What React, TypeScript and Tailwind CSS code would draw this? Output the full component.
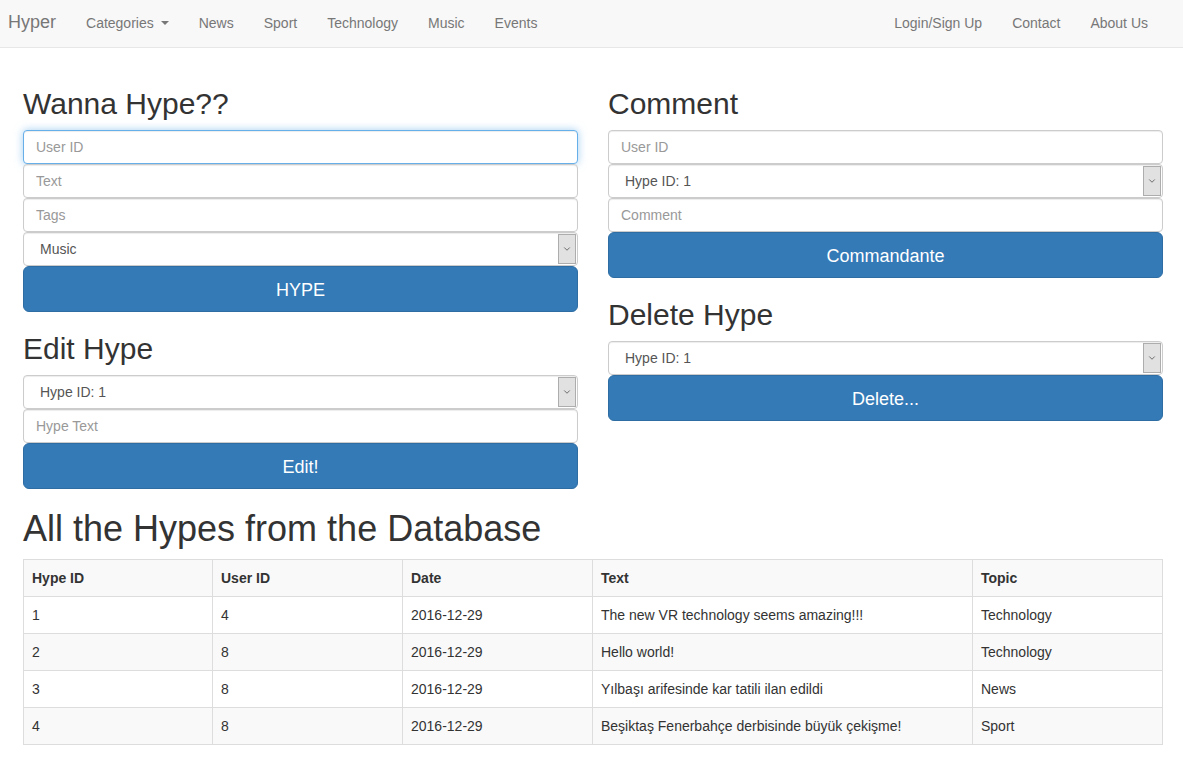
import { ChevronDown } from 'lucide-react'

const FONT = { fontFamily: '"Liberation Sans", Arial, Helvetica, sans-serif' }

const NAV_LEFT = ['News', 'Sport', 'Technology', 'Music', 'Events']
const NAV_RIGHT = ['Login/Sign Up', 'Contact', 'About Us']

const HYPES = [
  { id: 1, user: 4, date: '2016-12-29', text: 'The new VR technology seems amazing!!!', topic: 'Technology' },
  { id: 2, user: 8, date: '2016-12-29', text: 'Hello world!', topic: 'Technology' },
  { id: 3, user: 8, date: '2016-12-29', text: 'Yılbaşı arifesinde kar tatili ilan edildi', topic: 'News' },
  { id: 4, user: 8, date: '2016-12-29', text: 'Beşiktaş Fenerbahçe derbisinde büyük çekişme!', topic: 'Sport' },
]

function Input({ placeholder, focused = false }: { placeholder: string; focused?: boolean }) {
  return (
    <input
      type="text"
      placeholder={placeholder}
      className={`block w-full h-[34px] px-3 text-sm text-[#555] placeholder:text-[#999] bg-white rounded border outline-none ${
        focused
          ? 'border-[#66afe9] shadow-[inset_0_1px_1px_rgba(0,0,0,0.075),0_0_8px_rgba(102,175,233,0.6)]'
          : 'border-[#ccc] shadow-[inset_0_1px_1px_rgba(0,0,0,0.075)]'
      }`}
    />
  )
}

function Select({ value }: { value: string }) {
  return (
    <div className="flex h-[34px] w-full bg-white border border-[#ccc] rounded shadow-[inset_0_1px_1px_rgba(0,0,0,0.075)]">
      <div className="flex-1 flex items-center pl-4 text-sm text-[#555]">{value}</div>
      <div className="w-[18px] my-px mr-px flex items-center justify-center bg-[#e1e1e1] border border-[#adadad]">
        <ChevronDown className="w-[10px] h-[10px] text-[#555]" strokeWidth={2} />
      </div>
    </div>
  )
}

function Button({ label }: { label: string }) {
  return (
    <button className="block w-full h-[46px] pt-1 text-[18px] text-white bg-[#337ab7] border border-[#2e6da4] rounded-md">
      {label}
    </button>
  )
}

function Heading({ children }: { children: React.ReactNode }) {
  return <h2 className="text-[30px] leading-[1.1] text-[#333] mt-5 mb-[10px]">{children}</h2>
}

export default function App() {
  return (
    <div className="min-h-screen bg-white text-[#333] text-sm" style={FONT}>
      {/* Navbar */}
      <nav className="h-[48px] bg-[#f8f8f8] border-b border-[#e7e7e7] flex items-center justify-between">
        <div className="flex items-center -mt-px">
          <span className="pl-2 pr-[30px] text-[18px] text-[#777]">Hyper</span>
          <span className="flex items-center gap-[7px] pr-[30px] text-[#777]">
            Categories
            <span className="w-0 h-0 border-x-4 border-x-transparent border-t-4 border-t-[#777]" />
          </span>
          {NAV_LEFT.map((item) => (
            <span key={item} className="pr-[30px] text-[#777]">
              {item}
            </span>
          ))}
        </div>
        <div className="flex items-center pr-[35px] -mt-px">
          {NAV_RIGHT.map((item, i) => (
            <span key={item} className={`text-[#777] ${i > 0 ? 'pl-[30px]' : ''}`}>
              {item}
            </span>
          ))}
        </div>
      </nav>

      <div className="pl-[23px] pr-[20px] pt-[19px] pb-5">
        <div className="grid grid-cols-2 gap-[30px]">
          {/* Left column */}
          <div>
            <Heading>Wanna Hype??</Heading>
            <Input placeholder="User ID" focused />
            <Input placeholder="Text" />
            <Input placeholder="Tags" />
            <Select value="Music" />
            <Button label="HYPE" />

            <Heading>Edit Hype</Heading>
            <Select value="Hype ID: 1" />
            <Input placeholder="Hype Text" />
            <Button label="Edit!" />
          </div>

          {/* Right column */}
          <div>
            <Heading>Comment</Heading>
            <Input placeholder="User ID" />
            <Select value="Hype ID: 1" />
            <Input placeholder="Comment" />
            <Button label="Commandante" />

            <Heading>Delete Hype</Heading>
            <Select value="Hype ID: 1" />
            <Button label="Delete..." />
          </div>
        </div>

        <h1 className="text-[36px] leading-[1.1] text-[#333] mt-5 mb-[10px]">All the Hypes from the Database</h1>

        <table className="w-full border-collapse border border-[#ddd] table-fixed">
          <colgroup>
            <col className="w-[189px]" />
            <col className="w-[190px]" />
            <col className="w-[190px]" />
            <col className="w-[380px]" />
            <col />
          </colgroup>
          <tbody>
            <tr className="bg-[#f9f9f9]">
              {['Hype ID', 'User ID', 'Date', 'Text', 'Topic'].map((h) => (
                <th key={h} className="border border-[#ddd] p-2 text-left font-bold leading-5">
                  {h}
                </th>
              ))}
            </tr>
            {HYPES.map((row, i) => (
              <tr key={row.id} className={i % 2 === 1 ? 'bg-[#f9f9f9]' : 'bg-white'}>
                <td className="border border-[#ddd] p-2 leading-5">{row.id}</td>
                <td className="border border-[#ddd] p-2 leading-5">{row.user}</td>
                <td className="border border-[#ddd] p-2 leading-5">{row.date}</td>
                <td className="border border-[#ddd] p-2 leading-5">{row.text}</td>
                <td className="border border-[#ddd] p-2 leading-5">{row.topic}</td>
              </tr>
            ))}
          </tbody>
        </table>
      </div>
    </div>
  )
}
